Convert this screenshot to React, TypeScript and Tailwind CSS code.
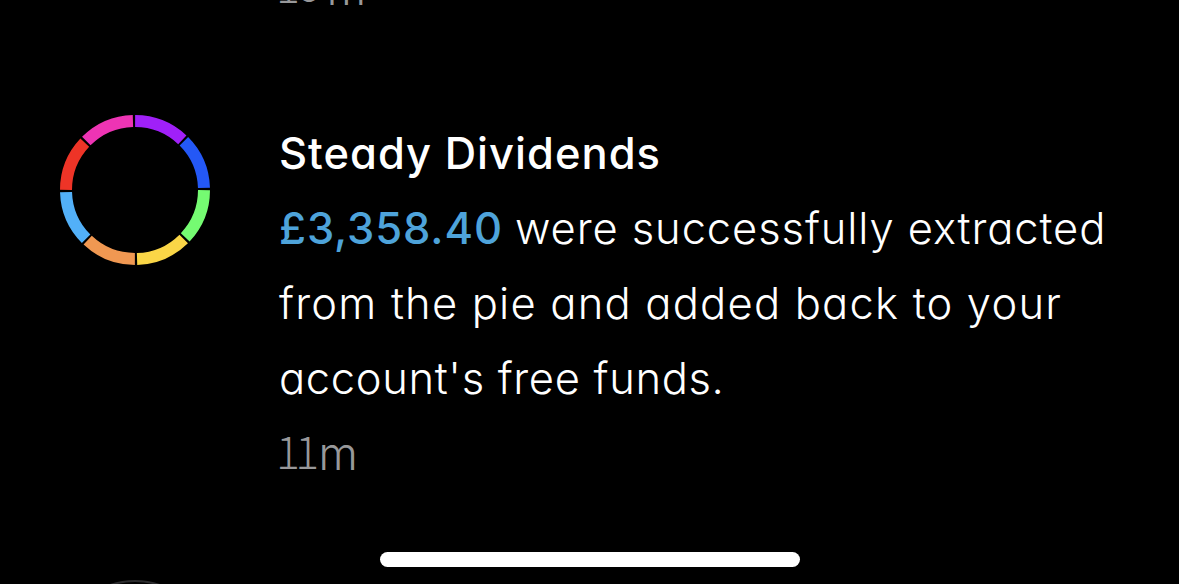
import React from "react";

const segments = [
  { color: "#a020f8" },
  { color: "#2458f6" },
  { color: "#75fb72" },
  { color: "#fad647" },
  { color: "#f09852" },
  { color: "#52b0f8" },
  { color: "#ee3427" },
  { color: "#ee34b4" },
];

function PieRing() {
  return (
    <svg viewBox="0 0 150 150" className="size-[150px] shrink-0" fill="none">
      {segments.map((item, index) => {
        return (
          <circle
            key={index}
            cx="75"
            cy="75"
            r="69"
            stroke={item.color}
            strokeWidth="12"
            pathLength="360"
            strokeDasharray="43.2 316.8"
            transform={`rotate(${index * 45 - 89.9} 75 75)`}
          />
        );
      })}
    </svg>
  );
}

// the slab "1" comes from the CJK face, other digits stay in the text face
function Time({ value, unit }: { value: string; unit: string }) {
  return (
    <p className="flex h-[75px] items-center font-light text-[#98989a]">
      <span className="-ml-[3px] flex pb-[8px] font-['Noto_Sans_CJK_SC',sans-serif] text-[44.5px] tracking-[-4.6px]">
        {value.split("").map((digit, index) => {
          return (
            <span key={index} className={digit === "1" ? "" : "pt-[3px] font-['Inter',sans-serif] tracking-normal"}>
              {digit}
            </span>
          );
        })}
      </span>
      <span className="pl-[4px] text-[45px]">{unit}</span>
    </p>
  );
}

export default function App() {
  return (
    <main className="relative h-[584px] w-[1179px] overflow-hidden bg-black font-['Inter',sans-serif] text-[43.5px] leading-[75px] font-light whitespace-nowrap text-white [font-feature-settings:'cv11']">
      <div className="-mt-[49px] pl-[279px]">
        <Time value="10" unit="m" />
      </div>

      <article className="mt-[89px] flex h-[376px] gap-[69px] pl-[60px]">
        <PieRing />
        <div className="pt-px">
          <h2 className="font-medium tracking-[1px]">Steady Dividends</h2>
          <p className="tracking-[0.9px]">
            <span className="font-medium text-[#4ea3da]">£3,358.40</span>
            <span className="-ml-px"> were successfully extracted</span>
          </p>
          <p className="tracking-[1.2px]">from the pie and added back to your</p>
          <p className="tracking-[0.65px]">account's free funds.</p>
          <Time value="11" unit="m" />
        </div>
      </article>

      <div className="mt-[89px] pl-[60px]">
        <div className="size-[150px] rounded-full border-2 border-[#2c2c2e]"></div>
      </div>

      {/* home indicator */}
      <div className="absolute top-[552px] left-[380px] h-[15px] w-[420px] rounded-full bg-white"></div>
    </main>
  );
}
